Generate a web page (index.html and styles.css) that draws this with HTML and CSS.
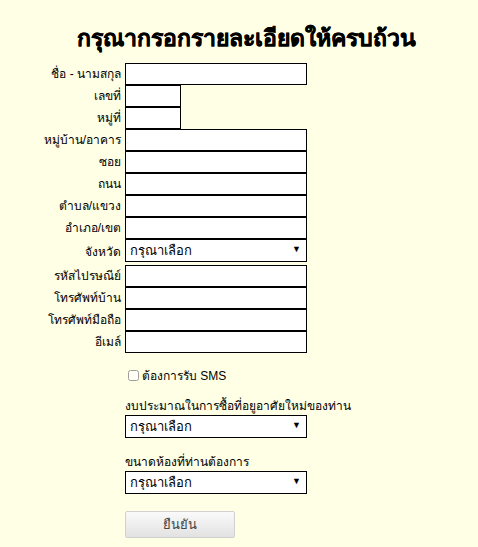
FILE: index.html
```html
<!DOCTYPE html>
<html lang="th">
<head>
<meta charset="UTF-8" />
<title>กรุณากรอกรายละเอียด</title>
<link rel="stylesheet" href="styles.css">
</head>
<body>
<div class="page">
  <h1>กรุณากรอกรายละเอียดให้ครบถ้วน</h1>

  <!-- ข้อมูลผู้ติดต่อ -->
  <div class="form">
    <label class="lbl" for="fullname">ชื่อ - นามสกุล</label>
    <input class="txt" id="fullname" type="text" />

    <label class="lbl" for="houseNo">เลขที่</label>
    <input class="txt short" id="houseNo" type="text" />

    <label class="lbl" for="moo">หมู่ที่</label>
    <input class="txt short" id="moo" type="text" />

    <label class="lbl" for="village">หมู่บ้าน/อาคาร</label>
    <input class="txt" id="village" type="text" />

    <label class="lbl" for="soi">ซอย</label>
    <input class="txt" id="soi" type="text" />

    <label class="lbl" for="road">ถนน</label>
    <input class="txt" id="road" type="text" />

    <label class="lbl" for="tambon">ตำบล/แขวง</label>
    <input class="txt" id="tambon" type="text" />

    <label class="lbl" for="amphoe">อำเภอ/เขต</label>
    <input class="txt" id="amphoe" type="text" />

    <label class="lbl" for="province">จังหวัด</label>
    <span class="sel-wrap province">
      <select class="sel" id="province">
        <option value="">กรุณาเลือก</option>
      </select>
    </span>

    <label class="lbl" for="zip">รหัสไปรษณีย์</label>
    <input class="txt" id="zip" type="text" />

    <label class="lbl" for="phone">โทรศัพท์บ้าน</label>
    <input class="txt" id="phone" type="text" />

    <label class="lbl" for="mobile">โทรศัพท์มือถือ</label>
    <input class="txt" id="mobile" type="text" />

    <label class="lbl" for="email">อีเมล์</label>
    <input class="txt" id="email" type="text" />
  </div>

  <div class="extra">
    <label class="sms"><input type="checkbox" id="sms" /> ต้องการรับ SMS</label>

    <div class="group">
      <label for="budget">งบประมาณในการซื้อที่อยูอาศัยใหม่ของท่าน</label>
      <span class="sel-wrap">
        <select class="sel" id="budget">
          <option value="">กรุณาเลือก</option>
        </select>
      </span>
    </div>

    <div class="group rooms">
      <label for="rooms">ขนาดห้องที่ท่านต้องการ</label>
      <span class="sel-wrap">
        <select class="sel" id="rooms">
          <option value="">กรุณาเลือก</option>
        </select>
      </span>
    </div>

    <button class="submit" type="button">ยืนยัน</button>
  </div>
</div>
</body>
</html>
```

FILE: styles.css
```css
body {
  margin: 0;
  background-color: #ffffe6;
  font-family: Tahoma, "Liberation Sans", "Noto Sans", sans-serif;
  font-size: 12px;
  color: #000;
}
.page {
  padding: 23px 0 10px;
}
h1 {
  margin: 0 0 10px;
  padding-left: 14px;
  text-align: center;
  font-size: 23px;
  font-weight: bold;
  line-height: 30px;
  -webkit-text-stroke: 0.4px #000;
}
.form {
  display: grid;
  grid-template-columns: 121px 182px;
  column-gap: 4px;
  align-items: center;
}
.lbl {
  text-align: right;
  line-height: 22px;
}
.txt {
  display: block;
  width: 182px;
  height: 22px;
  margin: 0;
  padding: 0 3px;
  box-sizing: border-box;
  border: 1px solid #000;
  background: #fff;
  font: inherit;
}
.txt.short {
  width: 56px;
}
.sel-wrap {
  position: relative;
  display: block;
  width: 182px;
}
.sel-wrap::after {
  content: "\25BC";
  position: absolute;
  right: 6px;
  top: 5px;
  font-size: 9px;
  pointer-events: none;
}
.province {
  margin-bottom: 3px;
}
.sel {
  display: block;
  width: 100%;
  height: 23px;
  margin: 0;
  padding: 0 4px;
  box-sizing: border-box;
  border: 1px solid #000;
  border-radius: 0;
  background: #fff;
  appearance: none;
  -webkit-appearance: none;
  font: inherit;
  font-size: 13px;
  color: #000;
}
.extra {
  margin-left: 125px;
  padding-top: 13px;
}
.sms {
  display: flex;
  align-items: center;
  margin-left: 3px;
  height: 18px;
}
.sms input {
  width: 11px;
  height: 11px;
  margin: 0 3px 0 0;
  accent-color: #ccc;
  opacity: 0.7;
}
.group {
  margin-top: 14px;
}
.group.rooms {
  margin-top: 16px;
}
.group label {
  display: block;
  line-height: 16px;
  margin-bottom: 1px;
}
.submit {
  margin-top: 17px;
  width: 110px;
  height: 27px;
  border: 1px solid #d0d0d0;
  border-radius: 2px;
  background: linear-gradient(#fafafa, #e2e2e2);
  color: #444;
  font: inherit;
  font-size: 13px;
}
```
